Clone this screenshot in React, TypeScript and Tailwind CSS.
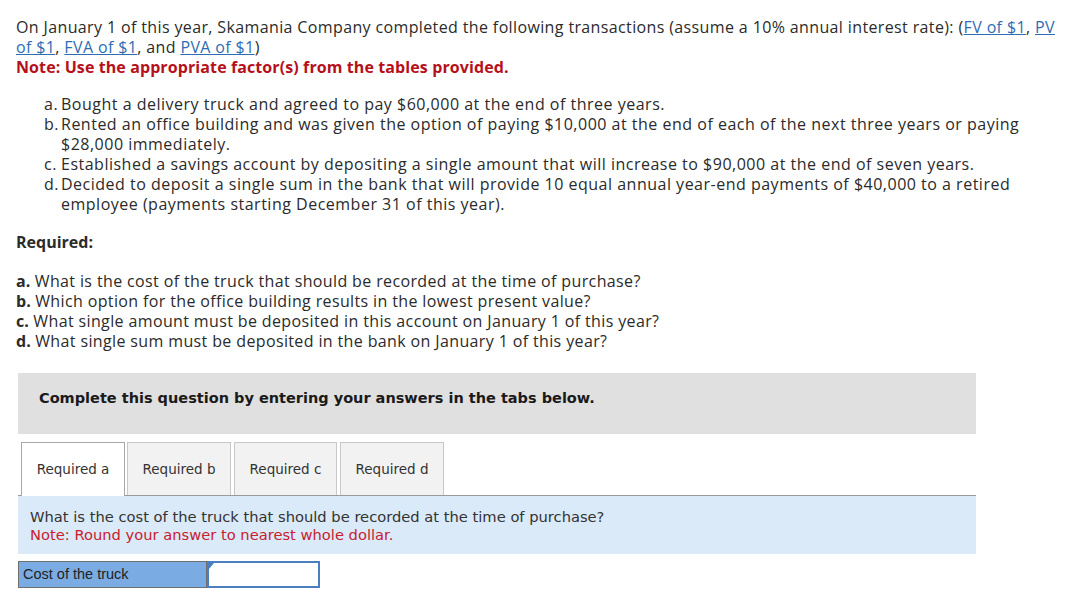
import React from "react";

const topFont = { fontFamily: '"Open Sans", "Liberation Sans", sans-serif' };

export default function App() {
  const link = "text-[#2e6db4] underline";
  const tab =
    "h-[53px] bg-[#f2f2f2] border border-b-0 border-[#c8c8c8] flex items-center justify-center text-[13.5px] text-[#333]";
  return (
    <div className="w-[1074px] h-[589px] bg-white overflow-hidden text-[#2b2b2b]">
      <div className="pl-4 pt-[17px] text-[16px] leading-[20px] tracking-[0.37px]" style={topFont}>
        <div className="whitespace-nowrap">
          On January 1 of this year, Skamania Company completed the following transactions (assume a 10% annual interest rate): (
          <a className={link}>FV of $1</a>, <a className={link}>PV</a>
          <br />
          <a className={link}>of $1</a>, <a className={link}>FVA of $1</a>, and <a className={link}>PVA of $1</a>)
        </div>
        <div className="font-bold text-[#b5111a] tracking-[0.1px]">Note: Use the appropriate factor(s) from the tables provided.</div>

        <div className="mt-[17px] pl-[28px] whitespace-nowrap tracking-[0.5px]">
          <div className="flex">
            <span className="w-[17px] shrink-0">a.</span>
            <span>Bought a delivery truck and agreed to pay $60,000 at the end of three years.</span>
          </div>
          <div className="flex">
            <span className="w-[17px] shrink-0">b.</span>
            <span>
              Rented an office building and was given the option of paying $10,000 at the end of each of the next three years or paying
              <br />
              $28,000 immediately.
            </span>
          </div>
          <div className="flex">
            <span className="w-[17px] shrink-0">c.</span>
            <span>Established a savings account by depositing a single amount that will increase to $90,000 at the end of seven years.</span>
          </div>
          <div className="flex">
            <span className="w-[17px] shrink-0">d.</span>
            <span>
              Decided to deposit a single sum in the bank that will provide 10 equal annual year-end payments of $40,000 to a retired
              <br />
              employee (payments starting December 31 of this year).
            </span>
          </div>
        </div>

        <div className="mt-[18px] font-bold tracking-normal">Required:</div>

        <div className="mt-[19px] whitespace-nowrap">
          <div><b className="tracking-normal">a.</b> What is the cost of the truck that should be recorded at the time of purchase?</div>
          <div><b className="tracking-normal">b.</b> Which option for the office building results in the lowest present value?</div>
          <div><b className="tracking-normal">c.</b> What single amount must be deposited in this account on January 1 of this year?</div>
          <div><b className="tracking-normal">d.</b> What single sum must be deposited in the bank on January 1 of this year?</div>
        </div>
      </div>

      <div className="ml-[18px] w-[958px]" style={{ fontFamily: '"DejaVu Sans", Verdana, sans-serif' }}>
        <div className="mt-[22px] h-[61px] bg-[#e0e0e0] pt-[16px] pl-[21px] text-[14.5px] leading-[18px] font-bold text-[#1a1a1a]">
          Complete this question by entering your answers in the tabs below.
        </div>

        <div className="mt-[8px] flex pl-[3px] items-end">
          <div className="relative z-10 w-[104px] h-[54px] -mb-px bg-white border border-b-0 border-[#a8a8a8] flex items-center justify-center text-[13.5px] text-[#333]">
            Required a
          </div>
          <div className={`ml-[2px] w-[104px] ${tab}`}>Required b</div>
          <div className={`ml-[3px] w-[103px] ${tab}`}>Required c</div>
          <div className={`ml-[3px] w-[104px] ${tab}`}>Required d</div>
        </div>

        <div className="border-t border-[#9a9a9a] bg-[#daeaf8] h-[59px] pl-[12px] pt-[12px] text-[14.7px] leading-[18px] whitespace-nowrap">
          <div className="text-[#333]">What is the cost of the truck that should be recorded at the time of purchase?</div>
          <div className="text-[#c8202f]">Note: Round your answer to nearest whole dollar.</div>
        </div>

        <div className="mt-[7px] flex h-[27px]">
          <div
            className="w-[189px] bg-[#7aace3] border border-[#6f6f6f] flex items-center pl-[4px] text-[14.5px] text-[#222]"
            style={{ fontFamily: '"Liberation Sans", Arial, sans-serif' }}
          >
            Cost of the truck
          </div>
          <div className="relative w-[113px] bg-white border-2 border-[#4a7fc1]">
            <div className="absolute left-0 top-0 w-0 h-0 border-t-[6px] border-t-[#4a7fc1] border-r-[5px] border-r-transparent" />
          </div>
        </div>
      </div>
    </div>
  );
}
